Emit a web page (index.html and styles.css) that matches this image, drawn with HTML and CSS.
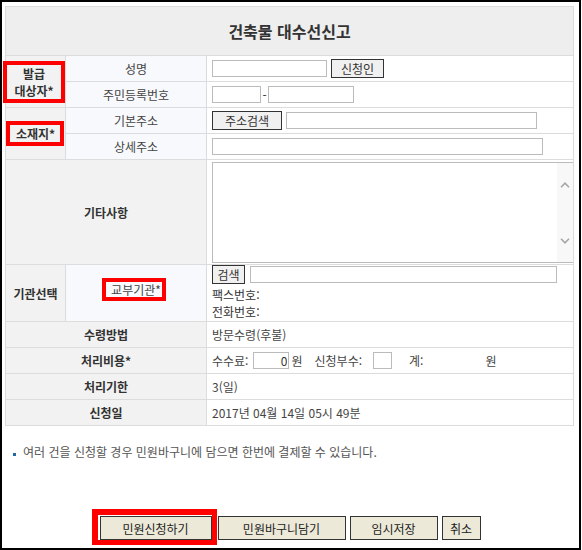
FILE: index.html
```html
<!DOCTYPE html>
<html lang="ko">
<head>
<meta charset="utf-8">
<title>건축물 대수선신고</title>
<link rel="stylesheet" href="styles.css">
</head>
<body>
<div class="frame">
  <table class="form">
    <colgroup><col class="c1"><col class="c2"><col class="c3"></colgroup>
    <tr class="r-head"><th colspan="3" class="title">건축물 대수선신고</th></tr>
    <tr class="r26">
      <th rowspan="2" class="lbl"><span class="mark mark-a">발급<br>대상자*</span></th>
      <td class="sub">성명</td>
      <td class="val"><div class="line g4"><input class="in w115" type="text"><button class="btn w53" type="button">신청인</button></div></td>
    </tr>
    <tr class="r26">
      <td class="sub">주민등록번호</td>
      <td class="val"><div class="line g1"><input class="in w49" type="text"><span class="dash">-</span><input class="in w86" type="text"></div></td>
    </tr>
    <tr class="r26">
      <th rowspan="2" class="lbl"><span class="mark mark-b">소재지*</span></th>
      <td class="sub">기본주소</td>
      <td class="val"><div class="line g4"><button class="btn w70" type="button">주소검색</button><input class="in w251" type="text"></div></td>
    </tr>
    <tr class="r26">
      <td class="sub">상세주소</td>
      <td class="val"><div class="line"><input class="in w331" type="text"></div></td>
    </tr>
    <tr class="r105">
      <th colspan="2" class="lbl">기타사항</th>
      <td class="val top">
        <div class="memo">
          <textarea class="memo-text"></textarea>
          <div class="memo-bar">
            <svg class="chev" width="10" height="6" viewBox="0 0 10 6"><path d="M1 5.2 L5 1.2 L9 5.2" fill="none" stroke="#a6a6a6" stroke-width="1.6"/></svg>
            <svg class="chev" width="10" height="6" viewBox="0 0 10 6"><path d="M1 0.8 L5 4.8 L9 0.8" fill="none" stroke="#a6a6a6" stroke-width="1.6"/></svg>
          </div>
        </div>
      </td>
    </tr>
    <tr class="r57">
      <th class="lbl">기관선택</th>
      <td class="sub"><span class="mark mark-c">교부기관*</span></td>
      <td class="val top">
        <div class="line g5"><button class="btn w33" type="button">검색</button><input class="in w307" type="text"></div>
        <div class="info">팩스번호:</div>
        <div class="info">전화번호:</div>
      </td>
    </tr>
    <tr class="r26">
      <th colspan="2" class="lbl">수령방법</th>
      <td class="val">방문수령(후불)</td>
    </tr>
    <tr class="r26">
      <th colspan="2" class="lbl">처리비용*</th>
      <td class="val">
        <div class="line">
          <span>수수료:</span><input class="in w36 num fee-in" type="text" value="0"><span class="won1">원</span>
          <span class="cnt-l">신청부수:</span><input class="in w19 cnt-in" type="text">
          <span class="sum-l">계:</span><span class="won2">원</span>
        </div>
      </td>
    </tr>
    <tr class="r26">
      <th colspan="2" class="lbl">처리기한</th>
      <td class="val">3(일)</td>
    </tr>
    <tr class="r26">
      <th colspan="2" class="lbl">신청일</th>
      <td class="val">2017년 04월 14일 05시 49분</td>
    </tr>
  </table>

  <p class="note"><span class="bullet"></span>여러 건을 신청할 경우 민원바구니에 담으면 한번에 결제할 수 있습니다.</p>

  <div class="actions">
    <span class="mark-btn"><button class="act w112" type="button">민원신청하기</button></span>
    <button class="act plain w128 ml1" type="button">민원바구니담기</button>
    <button class="act plain w88" type="button">임시저장</button>
    <button class="act plain w39" type="button">취소</button>
  </div>
</div>
</body>
</html>
```
FILE: styles.css
```css
body {
  margin: 0;
  background: #fff;
  font-family: "Noto Sans CJK KR", "Noto Sans", sans-serif;
  font-size: 12px;
  color: #444;
}

.frame {
  box-sizing: border-box;
  width: 581px;
  height: 550px;
  border: 2px solid #000;
  padding: 4px 0 0 3px;
}

.form {
  border-collapse: collapse;
  table-layout: fixed;
  width: 569px;
}
.c1 { width: 60px; }
.c2 { width: 141px; }

.form th,
.form td {
  border: 1px solid #dcdcdc;
  padding: 0 5px;
  vertical-align: middle;
  line-height: 17px;
}

.r-head { height: 49px; }
.r26 { height: 26px; }
.r105 { height: 105px; }
.r57 { height: 57px; }

.title {
  background: #eee;
  color: #333;
  font-size: 16px;
  font-weight: bold;
  text-align: center;
  padding-top: 5px;
}

.form .lbl {
  background: #f2f2f2;
  color: #333;
  font-weight: bold;
  text-align: center;
  padding: 0;
  white-space: nowrap;
}

.sub {
  background: #f8f9fc;
  text-align: center;
  white-space: nowrap;
}

.val {
  background: #fff;
  text-align: left;
  white-space: nowrap;
}
.val.top { vertical-align: top; }

.line {
  display: flex;
  align-items: center;
}
.g1 { gap: 1px; }
.g4 { gap: 4px; }
.g5 { gap: 5px; }

.in {
  box-sizing: border-box;
  height: 17px;
  margin: 0;
  padding: 0 2px;
  border: 1px solid #bbb;
  background: #fff;
  font: inherit;
  font-size: 12px;
  color: #333;
}
.num { text-align: right; padding-right: 1px; }

.w19 { width: 19px; }
.w33 { width: 33px; }
.w36 { width: 36px; }
.w39 { width: 39px; }
.w49 { width: 49px; }
.w53 { width: 53px; }
.w70 { width: 70px; }
.w86 { width: 86px; }
.w88 { width: 88px; }
.w112 { width: 112px; }
.w115 { width: 115px; }
.w128 { width: 128px; }
.w251 { width: 251px; }
.w307 { width: 307px; }
.w331 { width: 331px; }

.btn {
  box-sizing: border-box;
  height: 19px;
  margin: 0;
  padding: 0;
  border: 1px solid #333;
  background: #f0f0f0;
  font: inherit;
  font-size: 12px;
  line-height: 15px;
  color: #333;
}

.dash { width: 5px; text-align: center; color: #333; }

.memo {
  box-sizing: border-box;
  display: flex;
  width: 362px;
  height: 101px;
  margin-top: 2px;
  border: 1px solid #bbb;
  background: #fff;
}
.memo-text {
  flex: 1;
  margin: 0;
  padding: 2px;
  border: 0;
  resize: none;
  overflow: hidden;
  font: inherit;
  outline: none;
}
.memo-bar {
  width: 16px;
  background: #f8f8f8;
  display: flex;
  flex-direction: column;
  justify-content: space-between;
  align-items: center;
  padding: 19px 0 18px;
}
.chev { display: block; }

.info {
  line-height: 17px;
  color: #333;
}
.r57 .val .line { margin-bottom: 2px; }

.fee-in { margin-left: 5px; }
.won1 { margin-left: 2px; }
.cnt-l { margin-left: 12px; }
.cnt-in { margin-left: 11px; }
.sum-l { margin-left: 17px; }
.won2 { margin-left: 62px; }

.mark {
  display: inline-block;
  border: 4px solid #f00;
  vertical-align: middle;
}
.mark-a { padding: 0 7px; line-height: 17px; margin-left: -3px; }
.mark-b { padding: 0 5px 0 6px; line-height: 17px; margin-left: -1px; }
.mark-c { padding: 0 1px 0 5px; line-height: 15px; font-weight: normal; color: #444; margin-bottom: 8px; margin-left: -4px; }

.note {
  display: flex;
  align-items: flex-end;
  margin: 18px 0 0 8px;
  line-height: 16px;
  color: #555;
}
.bullet {
  width: 3px;
  height: 3px;
  background: #1f6aa5;
  margin: 0 7px 4px 0;
}

.actions {
  display: flex;
  align-items: flex-start;
  justify-content: center;
  gap: 4px;
  margin-top: 49px;
  padding-right: 12px;
}
.mark-btn {
  display: block;
  border-style: solid;
  border-color: #f00;
  border-width: 6px 5px 5px 6px;
  padding: 1px 0 0 2px;
}
.act {
  box-sizing: border-box;
  display: block;
  height: 24px;
  margin: 0;
  padding: 0;
  border: 1px solid #333;
  background: #ece9d8;
  font: inherit;
  font-size: 12px;
  color: #222;
}
.plain { margin-top: 7px; }
.ml1 { margin-left: -3px; }
```
